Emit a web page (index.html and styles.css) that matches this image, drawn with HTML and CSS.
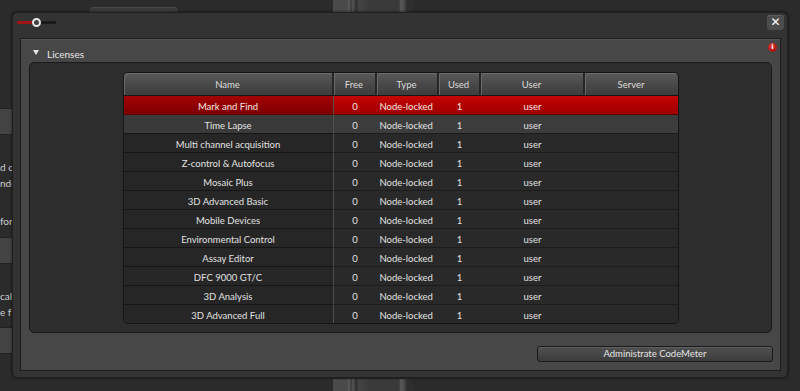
FILE: index.html
```html
<!DOCTYPE html>
<html>
<head>
<meta charset="utf-8">
<link rel="stylesheet" href="styles.css">
</head>
<body>
<div class="desktop">
  <div class="bg-tab"></div>
  <div class="bg-stripes top"></div>
  <div class="bg-stripes bottom"></div>
  <div class="bg-left">
    <div class="bg-btn b1"></div>
    <div class="bg-text t1">d o</div>
    <div class="bg-text t2">nde</div>
    <div class="bg-text t3">for</div>
    <div class="bg-btn b2"></div>
    <div class="bg-text t4">call</div>
    <div class="bg-text t5">e f</div>
    <div class="bg-btn b3"></div>
  </div>

  <div class="dialog">
    <div class="titlebar">
      <div class="slider">
        <span class="track-red"></span>
        <span class="knob"></span>
        <span class="track-dark"></span>
      </div>
      <div class="close">&#x2715;</div>
    </div>
    <div class="panel">
      <div class="panel-head">
        <span class="tri"></span>
        <span class="panel-title">Licenses</span>
        <span class="info">i</span>
      </div>
      <div class="content">
        <table class="lic">
          <colgroup>
            <col class="c-name"><col class="c-free"><col class="c-type"><col class="c-used"><col class="c-user"><col class="c-server">
          </colgroup>
          <thead>
            <tr><th class="first">Name</th><th>Free</th><th>Type</th><th>Used</th><th>User</th><th class="last">Server</th></tr>
          </thead>
          <tbody>
            <tr class="sel"><td class="nm">Mark and Find</td><td>0</td><td>Node-locked</td><td>1</td><td>user</td><td></td></tr>
            <tr class="hov"><td class="nm">Time Lapse</td><td>0</td><td>Node-locked</td><td>1</td><td>user</td><td></td></tr>
            <tr><td class="nm">Multi channel acquisition</td><td>0</td><td>Node-locked</td><td>1</td><td>user</td><td></td></tr>
            <tr><td class="nm">Z-control &amp; Autofocus</td><td>0</td><td>Node-locked</td><td>1</td><td>user</td><td></td></tr>
            <tr><td class="nm">Mosaic Plus</td><td>0</td><td>Node-locked</td><td>1</td><td>user</td><td></td></tr>
            <tr><td class="nm">3D Advanced Basic</td><td>0</td><td>Node-locked</td><td>1</td><td>user</td><td></td></tr>
            <tr><td class="nm">Mobile Devices</td><td>0</td><td>Node-locked</td><td>1</td><td>user</td><td></td></tr>
            <tr><td class="nm">Environmental Control</td><td>0</td><td>Node-locked</td><td>1</td><td>user</td><td></td></tr>
            <tr><td class="nm">Assay Editor</td><td>0</td><td>Node-locked</td><td>1</td><td>user</td><td></td></tr>
            <tr><td class="nm">DFC 9000 GT/C</td><td>0</td><td>Node-locked</td><td>1</td><td>user</td><td></td></tr>
            <tr><td class="nm">3D Analysis</td><td>0</td><td>Node-locked</td><td>1</td><td>user</td><td></td></tr>
            <tr class="lastrow"><td class="nm">3D Advanced Full</td><td>0</td><td>Node-locked</td><td>1</td><td>user</td><td></td></tr>
          </tbody>
        </table>
      </div>
      <div class="panel-foot">
        <button class="cm-btn">Administrate CodeMeter</button>
      </div>
    </div>
  </div>
</div>
</body>
</html>
```

FILE: styles.css
```css
html, body {
  margin: 0;
  padding: 0;
  background: #2a2a2a;
  width: 800px;
  height: 391px;
  overflow: hidden;
  font-family: Lato, "Open Sans", sans-serif;
  font-size: 9.5px;
  color: #e2e2e2;
}

.desktop {
  position: relative;
  width: 800px;
  height: 391px;
  background: #2b2b2b;
}

.bg-tab {
  position: absolute;
  left: 90px;
  top: 7px;
  width: 88px;
  height: 8px;
  background: #3a3a3a;
  border-radius: 4px 4px 0 0;
  border-top: 1px solid #4a4a4a;
}

.bg-stripes {
  position: absolute;
  left: 333px;
  width: 80px;
  background: linear-gradient(90deg, #4a4a4a 0, #4a4a4a 14px, #5c5c5c 16px, #3a3a3a 18px, #555 20px, #2e2e2e 23px, #444 26px, #3a3a3a 36px, #3a3a3a 66px, #5a5a5a 68px, #444 72px, #2e2e2e 74px, #2e2e2e 80px);
}
.bg-stripes.top { top: 0; height: 12px; }
.bg-stripes.bottom { top: 379px; height: 12px; }

.bg-left {
  position: absolute;
  left: 0;
  top: 0;
  width: 20px;
  height: 391px;
}
.bg-btn {
  position: absolute;
  left: -4px;
  width: 16px;
  height: 25px;
  background: #444;
  border: 1px solid #222;
  border-radius: 2px;
}
.b1 { top: 108px; }
.b2 { top: 237px; }
.b3 { top: 327px; }
.bg-text {
  position: absolute;
  left: 0;
  color: #cfcfcf;
  white-space: nowrap;
  line-height: 12px;
  font-size: 10px;
}
.t1 { top: 161px; }
.t2 { top: 177px; }
.t3 { top: 215px; }
.t4 { top: 290px; }
.t5 { top: 306px; }

.dialog {
  position: absolute;
  left: 12px;
  top: 12px;
  width: 774px;
  height: 364px;
  background: #333333;
  border: 1px solid #1f1f1f;
  border-radius: 5px;
  box-shadow: 0 0 3px rgba(0,0,0,0.6);
  display: flex;
  flex-direction: column;
}

.titlebar {
  height: 25px;
  flex: none;
  display: flex;
  align-items: flex-start;
  justify-content: space-between;
  padding: 0 3px 0 4px;
}

.slider {
  display: flex;
  align-items: center;
  margin-top: 4px;
  height: 10px;
}
.track-red {
  width: 16px;
  height: 3px;
  background: #a01414;
  border-radius: 1px;
  margin-right: -1px;
}
.knob {
  width: 5px;
  height: 5px;
  border: 2px solid #e8e8e8;
  background: #444;
  border-radius: 50%;
  position: relative;
  z-index: 1;
}
.track-dark {
  width: 16px;
  height: 3px;
  background: #1a1a1a;
  border-radius: 1px;
  margin-left: -1px;
}

.close {
  margin-top: 2px;
  width: 17px;
  height: 15px;
  background: #4c4c4c;
  border-radius: 3px;
  color: #ffffff;
  font-family: "DejaVu Sans", sans-serif;
  font-weight: bold;
  font-size: 12px;
  line-height: 15px;
  text-align: center;
  box-shadow: inset 0 1px 0 #5c5c5c;
}

.panel {
  flex: 1;
  margin: 0 6px 6px 7px;
  background: #474747;
  border: 1px solid #1c1c1c;
  box-shadow: inset 0 1px 0 #555;
  display: flex;
  flex-direction: column;
}

.panel-head {
  height: 23px;
  flex: none;
  display: flex;
  align-items: center;
  padding: 6px 8px 0 12px;
  box-sizing: border-box;
  position: relative;
}
.tri {
  width: 0;
  height: 0;
  border-left: 3px solid transparent;
  border-right: 3px solid transparent;
  border-top: 5px solid #e6e6e6;
  margin-right: 8px;
  margin-top: -3px;
}
.panel-title {
  color: #e6e6e6;
  font-size: 10px;
}
.info {
  position: absolute;
  right: 3px;
  top: 4px;
  width: 9px;
  height: 9px;
  border-radius: 50%;
  background: radial-gradient(circle at 40% 35%, #e43434, #8a0808);
  color: #fff;
  font-size: 7px;
  font-weight: bold;
  line-height: 9px;
  text-align: center;
  font-family: "DejaVu Sans", sans-serif;
}

.content {
  margin: 0 8px 0 8px;
  height: 271px;
  flex: none;
  background: #2d2d2d;
  border: 1px solid #1a1a1a;
  border-radius: 5px;
  display: flex;
  justify-content: center;
  align-items: flex-start;
  padding-top: 9px;
  box-sizing: border-box;
}

.lic {
  width: 554px;
  border-collapse: separate;
  border-spacing: 0;
  table-layout: fixed;
  border: 1px solid #151515;
  border-radius: 5px;
  overflow: hidden;
  background: #262626;
}
.c-name { width: 210px; }
.c-free { width: 43px; }
.c-type { width: 62px; }
.c-used { width: 42px; }
.c-user { width: 104px; }
.c-server { width: 93px; }

.lic th {
  height: 22px;
  padding: 0;
  font-weight: normal;
  color: #dcdcdc;
  font-size: 9.5px;
  background: linear-gradient(#5a5a5a, #474747 55%, #3e3e3e);
  border-right: 2px solid #262626;
  border-bottom: 1px solid #151515;
  box-shadow: inset 1px 1px 0 #6a6a6a;
}
.lic th.first { border-top-left-radius: 4px; }
.lic th.last { border-right: none; border-top-right-radius: 4px; }

.lic td {
  height: 19px;
  padding: 2px 0 0 0;
  box-sizing: border-box;
  color: #e2e2e2;
  font-size: 9.5px;
  white-space: nowrap;
  background: #292929;
  border-bottom: 1px solid #1c1c1c;
  text-align: center;
}
.lic td.nm {
  background: #262626;
  border-right: 1px solid #505050;
  border-bottom: 1px solid #161616;
}
.lic td:nth-child(3) { text-align: left; padding-left: 3px; }
.lic tr.lastrow td { border-bottom: none; height: 18px; }

.lic tr.sel td {
  background: linear-gradient(#c80606, #b00000 50%, #a00000);
  color: #f6e6e6;
  border-bottom-color: #5a0000;
}
.lic tr.sel td.nm {
  background: linear-gradient(#a40404, #900000 50%, #7e0000);
}
.lic tr.hov td {
  background: #3c3c3c;
}
.lic tr.hov td.nm {
  background: #3a3a3a;
}

.panel-foot {
  flex: 1;
  display: flex;
  justify-content: flex-end;
  align-items: center;
  padding: 0 7px 0 0;
}
.cm-btn {
  width: 236px;
  height: 16px;
  margin-top: 5px;
  padding: 0;
  font-family: Lato, "Open Sans", sans-serif;
  font-size: 9.5px;
  color: #e4e4e4;
  background: linear-gradient(#505050, #3c3c3c);
  border: 1px solid #1a1a1a;
  border-radius: 3px;
  box-shadow: inset 0 1px 0 #606060;
  line-height: 14px;
}
```
